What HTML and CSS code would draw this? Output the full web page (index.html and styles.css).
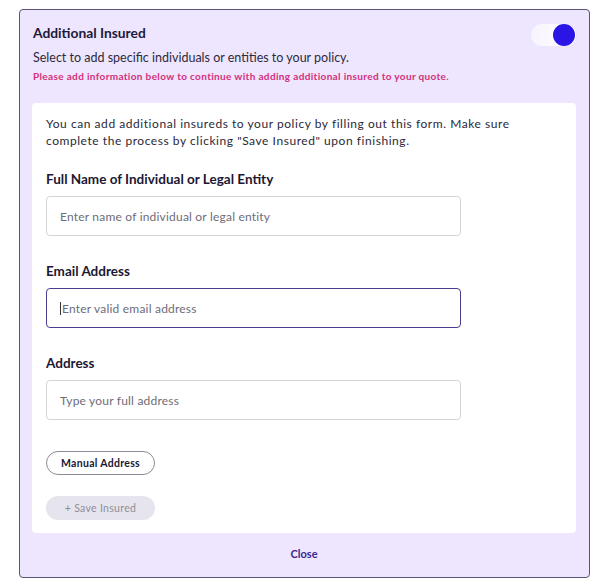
FILE: index.html
```html
<!DOCTYPE html>
<html lang="en">
<head>
  <meta charset="UTF-8">
  <meta name="viewport" content="width=device-width, initial-scale=1.0">
  <title>Additional Insured</title>
  <link rel="stylesheet" href="styles.css">
</head>
<body>

  <div class="panel">
    <div class="panel-head">
      <div class="panel-text">
        <div class="title">Additional Insured</div>
        <div class="subtitle">Select to add specific individuals or entities to your policy.</div>
        <div class="warning">Please add information below to continue with adding additional insured to your quote.</div>
      </div>
      <!-- Toggle -->
      <div class="toggle"><span class="knob"></span></div>
    </div>

    <div class="card">
      <p class="intro">You can add additional insureds to your policy by filling out this form. Make sure complete the process by clicking "Save Insured" upon finishing.</p>

      <div class="field">
        <label class="label">Full Name of Individual or Legal Entity</label>
        <div class="input">Enter name of individual or legal entity</div>
      </div>

      <div class="field">
        <label class="label">Email Address</label>
        <div class="input focused"><span class="caret"></span>Enter valid email address</div>
      </div>

      <div class="field">
        <label class="label">Address</label>
        <div class="input">Type your full address</div>
      </div>

      <button class="manual-btn">Manual Address</button>
      <button class="save-btn">+ Save Insured</button>
    </div>

    <div class="close">Close</div>
  </div>

</body>
</html>
```

FILE: styles.css
```css
body, html {
  margin: 0;
  background: #fff;
  font-family: "Lato", sans-serif;
  color: #1c1733;
}

body {
  padding: 9px 8px 11px 19px;
}

.panel {
  width: 544px;
  background: #ede6fe;
  border: 1px solid #5a5472;
  border-radius: 4px;
  padding: 0 13px 0 12px;
}

.panel-head {
  display: flex;
  justify-content: space-between;
  padding-top: 13px;
}

.panel-text {
  padding-left: 1px;
}

.title {
  font-size: 13.8px;
  font-weight: 700;
  line-height: 20px;
  color: #1f1a3a;
}

.subtitle {
  margin-top: 6px;
  font-size: 12.5px;
  line-height: 18px;
  color: #2d2a3c;
}

.warning {
  margin-top: 1px;
  font-size: 10px;
  font-weight: 700;
  line-height: 16px;
  color: #d42f7a;
  letter-spacing: 0.35px;
}

.toggle {
  width: 45px;
  height: 22px;
  margin-top: 1px;
  border-radius: 11px;
  background: linear-gradient(90deg, #f7f4fd, #ffffff);
  position: relative;
}

.knob {
  position: absolute;
  right: 1px;
  top: 0;
  width: 22px;
  height: 22px;
  border-radius: 50%;
  background: #2b14e6;
}

.card {
  margin-top: 19px;
  background: #fff;
  border-radius: 4px;
  padding: 12px 14px 13px 14px;
}

.intro {
  margin: 0;
  width: 480px;
  font-size: 12px;
  line-height: 17px;
  letter-spacing: 0.55px;
  color: #2b2838;
}

.field {
  margin-top: 21px;
}

.field + .field {
  margin-top: 26px;
}

.label {
  display: block;
  font-size: 13.5px;
  font-weight: 700;
  line-height: 18px;
  color: #1c1733;
}

.input {
  margin-top: 8px;
  width: 415px;
  height: 40px;
  box-sizing: border-box;
  border: 1px solid #d4d4d8;
  border-radius: 4px;
  padding-left: 13px;
  font-size: 12px;
  letter-spacing: 0.2px;
  color: #6e6c78;
  display: flex;
  align-items: center;
}

.input.focused {
  border: 1.5px solid #4d3b8f;
}

.caret {
  display: inline-block;
  width: 1px;
  height: 13px;
  background: #333;
  margin-right: 1px;
}

.manual-btn, .save-btn {
  display: block;
  width: 109px;
  height: 24px;
  border-radius: 12px;
  font-family: "Lato", sans-serif;
  font-size: 10.5px;
  letter-spacing: 0.3px;
  padding: 0;
}

.manual-btn {
  margin-top: 31px;
  background: #fff;
  border: 1px solid #8c8a96;
  font-weight: 700;
  color: #1c1733;
}

.save-btn {
  margin-top: 21px;
  background: #e6e5ee;
  border: none;
  color: #8e8c9a;
}

.close {
  text-align: center;
  font-size: 11px;
  font-weight: 700;
  color: #3b2a8c;
  padding: 14px 0 17px;
}
```
